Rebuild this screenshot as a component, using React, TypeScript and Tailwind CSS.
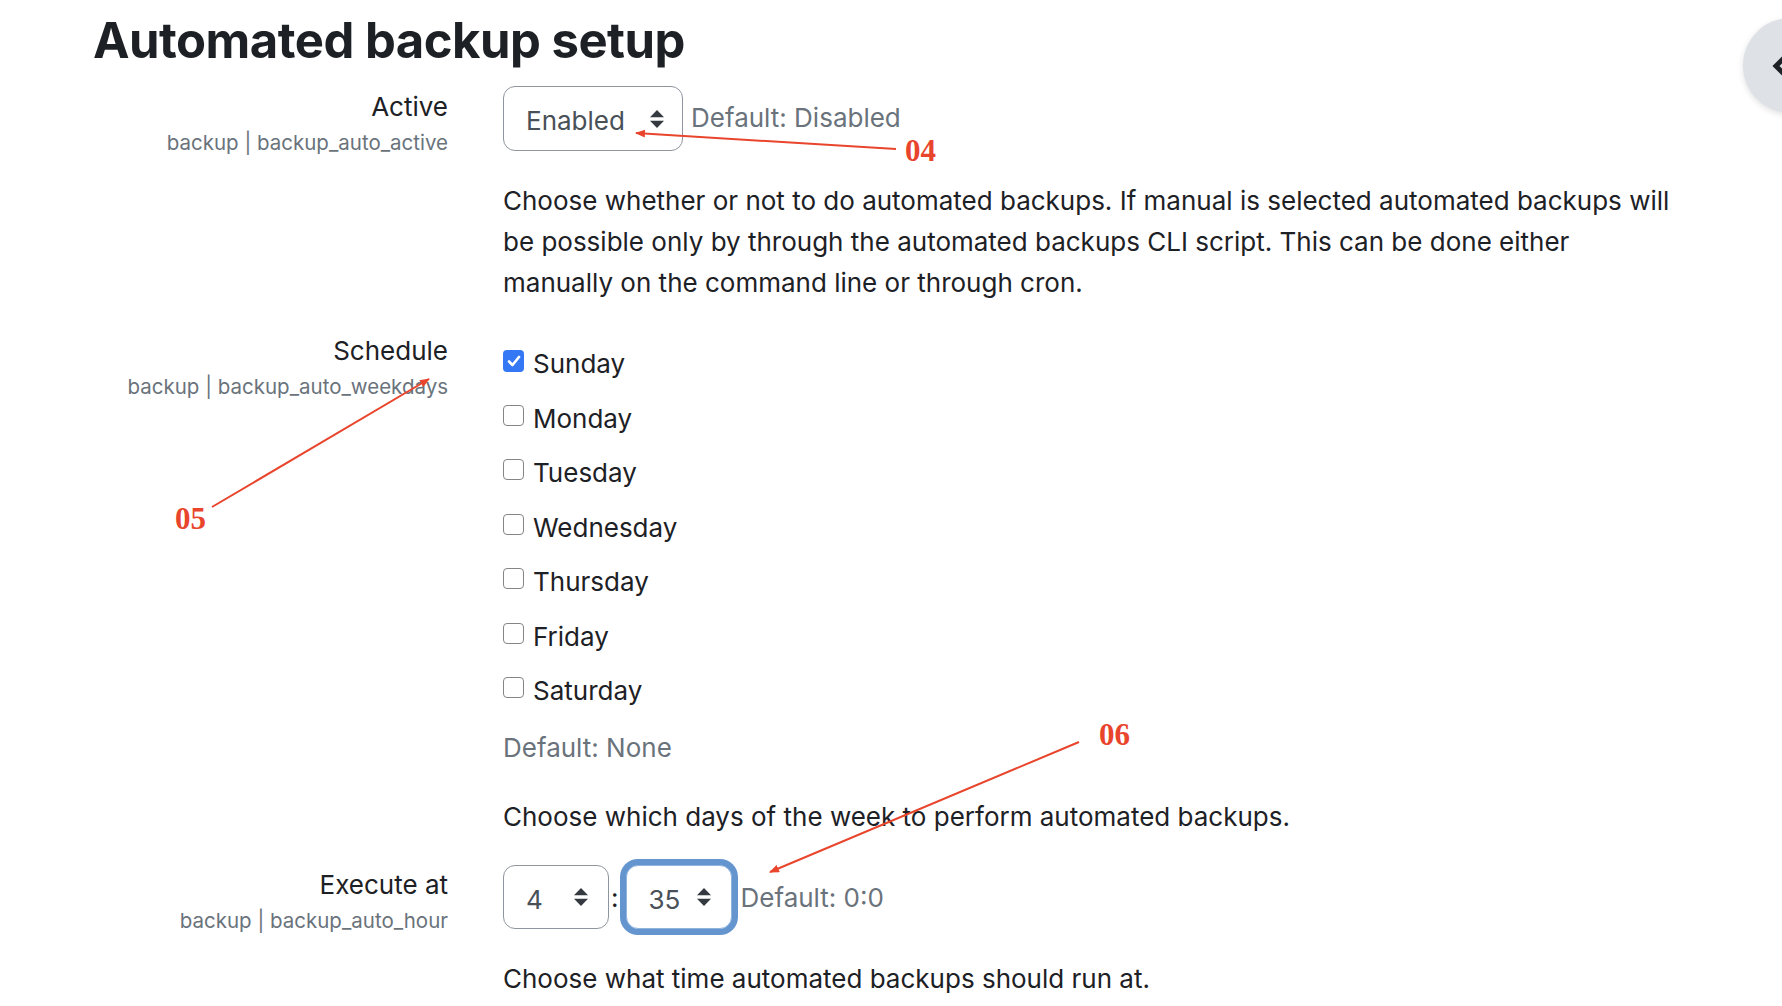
import React from "react";

const FONT = "font-['Inter','Noto_Sans',sans-serif]";

function Arrows() {
  return (
    <svg width="14" height="18" viewBox="0 0 14 18" className="shrink-0">
      <polygon points="0,7.3 7,0 14,7.3" fill="#343a40" />
      <polygon points="0,10.7 14,10.7 7,18" fill="#343a40" />
    </svg>
  );
}

function FakeSelect({ value, width }: { value: string; width: string }) {
  return (
    <div
      className={`flex h-[65px] ${width} items-center rounded-[12px] border border-[#8f959e] bg-white pl-[22px] pr-[18px] text-[26px] text-[#495057]`}
    >
      <span className="pt-[4px]">{value}</span>
      <span className="ml-auto">
        <Arrows />
      </span>
    </div>
  );
}

function Check({ checked, label }: { checked?: boolean; label: string }) {
  return (
    <div className="flex h-[41px] items-start">
      {checked ? (
        <div className="mt-[7px] flex h-[22px] w-[21px] items-center justify-center rounded-[4px] bg-[#3478f6]">
          <svg width="14" height="12" viewBox="0 0 14 12">
            <polyline
              points="2,6.5 5.5,10 12,2"
              fill="none"
              stroke="white"
              strokeWidth="2.6"
              strokeLinecap="round"
              strokeLinejoin="round"
            />
          </svg>
        </div>
      ) : (
        <div className="mt-[7px] h-[21px] w-[21px] rounded-[4px] border-[1.5px] border-[#858585] bg-white" />
      )}
      <span className="ml-[9px] text-[26px] leading-[41px] text-[#1d2125]">{label}</span>
    </div>
  );
}

function Label({ title, sub }: { title: string; sub: string }) {
  return (
    <div className="w-[355px] shrink-0 text-right">
      <div className="text-[26px] leading-[41px] text-[#1d2125]">{title}</div>
      <div className="mt-[1px] text-[20.5px] leading-[30px] text-[#6a737b]">{sub}</div>
    </div>
  );
}

export default function App() {
  return (
    <div className={`relative h-[1006px] w-[1782px] overflow-hidden bg-white ${FONT}`}>
      <div className="pl-[93px] pt-[11px]">
        <h2 className="text-[49px] font-bold leading-[60px] tracking-[-0.5px] text-[#1d2125]">
          Automated backup setup
        </h2>

        {/* Active */}
        <div className="mt-[15px] flex">
          <Label title="Active" sub="backup | backup_auto_active" />
          <div className="ml-[55px]">
            <div className="flex items-center">
              <FakeSelect value="Enabled" width="w-[180px]" />
              <span className="ml-[8px] -mt-[2px] text-[26px] leading-[41px] text-[#6a737b]">
                Default: Disabled
              </span>
            </div>
            <p className="mt-[29px] text-[26px] leading-[41px] text-[#1d2125]">
              Choose whether or not to do automated backups. If manual is selected automated backups will
              <br />
              be possible only by through the automated backups CLI script. This can be done either
              <br />
              manually on the command line or through cron.
            </p>
          </div>
        </div>

        {/* Schedule */}
        <div className="mt-[27px] flex">
          <Label title="Schedule" sub="backup | backup_auto_weekdays" />
          <div className="ml-[55px] pt-[13px]">
            <div className="flex flex-col gap-[13.5px]">
              <Check checked label="Sunday" />
              <Check label="Monday" />
              <Check label="Tuesday" />
              <Check label="Wednesday" />
              <Check label="Thursday" />
              <Check label="Friday" />
              <Check label="Saturday" />
            </div>
            <div className="mt-[16px] text-[26px] leading-[41px] text-[#6a737b]">Default: None</div>
            <p className="mt-[28px] text-[26px] leading-[41px] text-[#1d2125]">
              Choose which days of the week to perform automated backups.
            </p>
          </div>
        </div>

        {/* Execute at */}
        <div className="mt-[27px] flex">
          <Label title="Execute at" sub="backup | backup_auto_hour" />
          <div className="ml-[55px] pt-[1px]">
            <div className="flex items-center">
              <div className="flex h-[64px] w-[106px] items-center rounded-[12px] border border-[#8f959e] bg-white pl-[22px] pr-[20px] text-[26px] text-[#495057]">
                <span className="pt-[4px]">4</span>
                <span className="ml-auto">
                  <Arrows />
                </span>
              </div>
              <span className="ml-[2px] mr-[7px] text-[26px] leading-[41px] text-[#1d2125]">:</span>
              <div className="flex h-[64px] w-[106px] items-center rounded-[12px] border border-[#8fb4e0] bg-white pl-[22px] pr-[20px] text-[26px] text-[#495057] shadow-[0_0_0_6px_#6595cf]">
                <span className="pt-[4px]">35</span>
                <span className="ml-auto">
                  <Arrows />
                </span>
              </div>
              <span className="ml-[9px] text-[26px] leading-[41px] text-[#6a737b]">Default: 0:0</span>
            </div>
            <p className="mt-[29px] text-[26px] leading-[41px] text-[#1d2125]">
              Choose what time automated backups should run at.
            </p>
          </div>
        </div>
      </div>

      {/* drawer toggle button */}
      <div className="absolute left-[1743px] top-[18px] flex h-[95px] w-[95px] items-center rounded-full bg-[#dee2e6] shadow-[0_2px_6px_rgba(0,0,0,0.12)]">
        <svg width="20" height="24" viewBox="0 0 20 24" className="ml-[29px]">
          <polyline
            points="12,4 4,12 12,20"
            fill="none"
            stroke="#1d2125"
            strokeWidth="5"
            strokeLinejoin="miter"
          />
        </svg>
      </div>

      {/* annotations */}
      <svg className="pointer-events-none absolute left-0 top-0" width="1782" height="1006" viewBox="0 0 1782 1006">
        <defs>
          <marker id="ah" markerWidth="10" markerHeight="8" refX="9" refY="4" orient="auto" markerUnits="userSpaceOnUse">
            <polygon points="0,0 10,4 0,8" fill="#e8452c" />
          </marker>
        </defs>
        <line x1="896" y1="149" x2="636" y2="133" stroke="#e8452c" strokeWidth="2" markerEnd="url(#ah)" />
        <line x1="212" y1="507" x2="429" y2="379" stroke="#e8452c" strokeWidth="2" markerEnd="url(#ah)" />
        <line x1="1079" y1="742" x2="770" y2="872" stroke="#e8452c" strokeWidth="2" markerEnd="url(#ah)" />
        <text x="905" y="161" fontFamily="'Liberation Serif', serif" fontWeight="bold" fontSize="31" fill="#e8452c">
          04
        </text>
        <text x="175" y="529" fontFamily="'Liberation Serif', serif" fontWeight="bold" fontSize="31" fill="#e8452c">
          05
        </text>
        <text x="1099" y="745" fontFamily="'Liberation Serif', serif" fontWeight="bold" fontSize="31" fill="#e8452c">
          06
        </text>
      </svg>
    </div>
  );
}
